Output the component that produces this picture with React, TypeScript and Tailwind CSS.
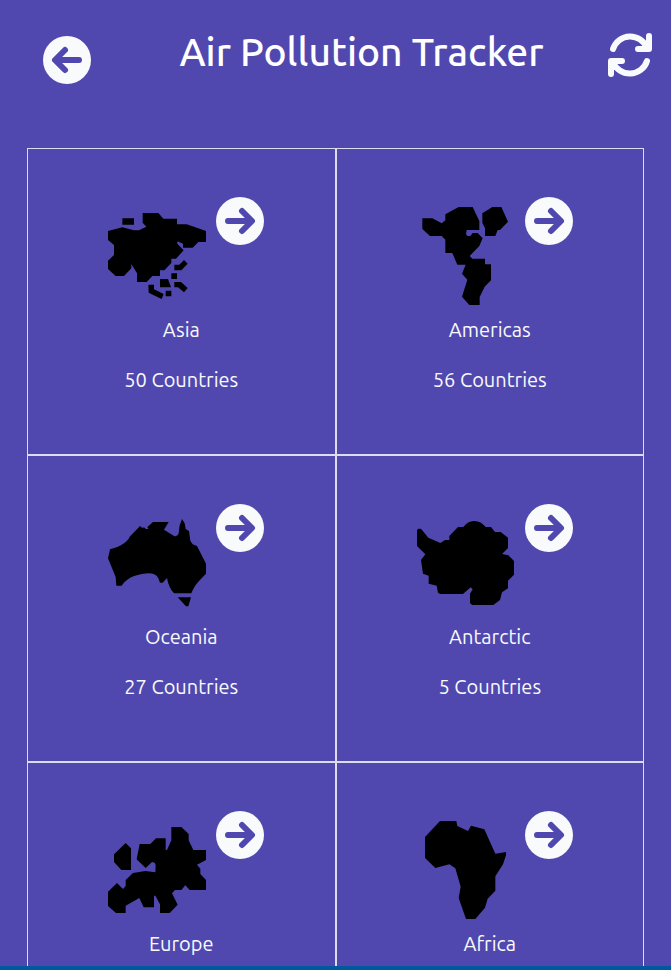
type Region = {
  name: string;
  countries: number;
  viewBox: string;
  shape: string;
};

const regions: Region[] = [
  {
    name: 'Asia',
    countries: 50,
    viewBox: '39 66 294 294',
    shape:
      'M82 100H117V119H82Z M143 84H190L205 101H246V118H275L333 138V171H310L293 188H264V176L247 169V176L266 196L243 221H229V234L208 256H195V273H172L155 291H126V265L109 237V250L87 273H62L39 252V227L57 210V180L39 165V138L82 127L117 136H132L154 125L143 113Z M238 239H253L267 225L278 236L259 256H238Z M229 265H246V282H229Z M195 282H219L228 307H195Z M238 291H258L278 309L267 322L249 307H238Z M160 299H177V313L206 327L200 342L161 323Z M212 317H229V334H212Z',
  },
  {
    name: 'Americas',
    countries: 56,
    viewBox: '36 66 294 294',
    shape:
      'M52 100H82L110 115L121 106V88L161 66H203L223 108V135H185L183 148L188 153H196L203 144H218L233 160L223 183L194 213L202 221H240V238H258V286L239 305L224 336V360H193L171 335L187 284L171 266L182 239H157L142 204H121V164L110 153H75L52 132Z M232 85L262 66H289L309 110L285 135H278L271 153H240V130L232 113Z',
  },
  {
    name: 'Oceania',
    countries: 27,
    viewBox: '39 57 294 294',
    shape:
      'M39 190L45 163L67 156C84 148 98 139 104 125L135 93L143 99L147 97L153 102H160L157 96L174 81H221L207 104L236 122Q247 128 251 115L254 91L261 72L269 85L272 102L282 108L286 137L293 148L306 153L333 206V236C315 254 298 270 289 295H237C225 282 219 266 216 249L203 263H195L190 250Q184 236 164 235C132 237 100 243 80 272H64L62 246Z M248 307H288L280 334H273Z',
  },
  {
    name: 'Antarctic',
    countries: 5,
    viewBox: '36 57 294 294',
    shape:
      'M36 105L40 101H47L51 105L70 128L106 144L120 135H133V123L159 96H175Q188 78 207 78Q227 77 242 96H258L270 111H287L309 128V159L291 177L310 181L327 198V239L309 257V280L291 292L285 315L265 330H201L195 324V296L203 283L197 277L174 297H105L99 293L95 272L71 266V242L54 236L48 195L61 178L36 153Z',
  },
  {
    name: 'Europe',
    countries: 53,
    viewBox: '39 63 294 294',
    shape:
      'M92 129L108 145V210H79L57 186V163Z M229 81H259L281 102V121L295 150H333V180L306 194L316 206V222L333 240V270H284L271 256L259 270H240L231 280L248 314L224 339H195V313L181 287H177V322H146L133 294L92 317V339H63L39 318V275L66 249L84 267L92 258V240L114 219L151 213L181 217L182 195L179 188L171 186L152 204L125 178L134 132H166L183 115H212V150H216L229 121Z',
  },
  {
    name: 'Africa',
    countries: 59,
    viewBox: '36 63 294 294',
    shape:
      'M105 63H154L157 78L189 93L198 77L238 88L271 161L303 156V166L294 193L271 229V272L248 296L240 323L211 357H183L161 294L167 260L151 205L133 193L91 204L60 174V111Z',
  },
];

function CircleArrow({ direction }: { direction: 'left' | 'right' }) {
  return (
    <svg viewBox="0 0 48 48" className="size-12" aria-hidden="true">
      <circle cx="24" cy="24" r="24" fill="currentColor" />
      <path
        d={direction === 'left' ? 'M36 24H13M22 14L12 24L22 34' : 'M12 24H35M26 14L36 24L26 34'}
        fill="none"
        stroke="#5048af"
        strokeWidth="6"
        strokeLinecap="round"
        strokeLinejoin="round"
      />
    </svg>
  );
}

function RefreshIcon() {
  return (
    <svg
      viewBox="0 0 48 48"
      className="size-12"
      fill="none"
      stroke="currentColor"
      strokeWidth="6"
      strokeLinecap="round"
      strokeLinejoin="round"
      aria-hidden="true"
    >
      <path d="M7 18A18 18 0 0 1 41 17M43 5V18H32" />
      <path d="M41 30A18 18 0 0 1 7 31M5 43V30H16" />
    </svg>
  );
}

function RegionCard({ name, countries, viewBox, shape }: Region) {
  return (
    <li className="flex h-[307px] flex-col items-center border border-[#dcdcec] pt-12">
      <div className="flex items-start gap-2.5 pl-2.5">
        <svg viewBox={viewBox} className="mt-2.5 size-[98px]" role="img" aria-label={`Map of ${name}`}>
          <path d={shape} fill="#000" />
        </svg>
        <button type="button" aria-label={`Show ${name}`} className="text-slate-50">
          <CircleArrow direction="right" />
        </button>
      </div>
      <h2 className="mt-3 text-xl leading-[26px]">{name}</h2>
      <p className="mt-6 text-xl leading-[26px]">{countries} Countries</p>
    </li>
  );
}

export default function App() {
  return (
    <div className="flex h-screen flex-col overflow-hidden bg-[#5048af] font-[Ubuntu,'Noto_Sans',sans-serif] text-slate-50">
      <header className="flex h-[148px] shrink-0 items-start justify-between pt-[31px] pr-[17px] pl-[43px]">
        <button type="button" aria-label="Back" className="mt-[5px]">
          <CircleArrow direction="left" />
        </button>
        <h1 className="pl-[26px] text-[39px] leading-[42px] font-medium text-white">Air Pollution Tracker</h1>
        <button type="button" aria-label="Refresh">
          <RefreshIcon />
        </button>
      </header>
      <main className="min-h-0 flex-1 overflow-hidden px-[27px]">
        <ul className="grid grid-cols-2">
          {regions.map((region) => (
            <RegionCard key={region.name} {...region} />
          ))}
        </ul>
      </main>
      <footer className="h-1 shrink-0 bg-[#00599c]" />
    </div>
  );
}
